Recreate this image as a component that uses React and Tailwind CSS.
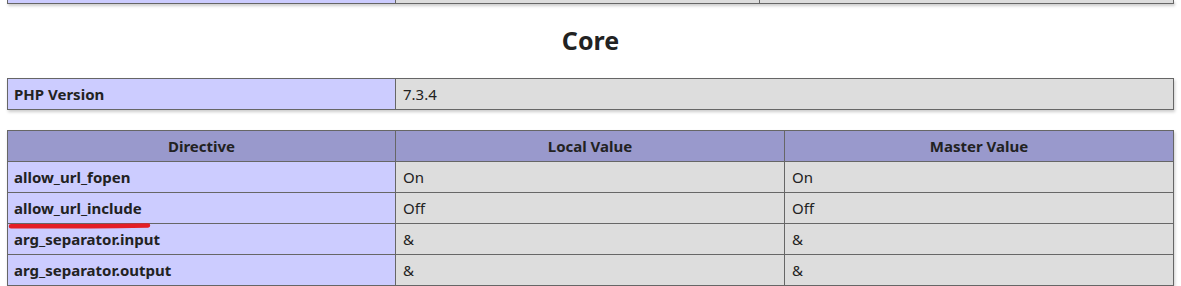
import React from 'react';

const font = { fontFamily: '"Noto Sans", "Open Sans", sans-serif' };

const rows = [
  { name: 'allow_url_fopen', local: 'On', master: 'On' },
  { name: 'allow_url_include', local: 'Off', master: 'Off' },
  { name: 'arg_separator.input', local: '&', master: '&' },
  { name: 'arg_separator.output', local: '&', master: '&' },
];

const App = () => {
  return (
    <div className="bg-white text-[#222] w-[1181px] h-[286px] overflow-hidden" style={font}>
      {/* Tail of the previous table */}
      <div className="mx-[7px] w-[1167px] flex h-[4px] border-x border-b border-[#666] shadow-[1px_2px_3px_#ccc]">
        <div className="w-[388px] bg-[#ccf] border-r border-[#666]"></div>
        <div className="w-[364px] bg-[#ddd] border-r border-[#666]"></div>
        <div className="flex-1 bg-[#ddd]"></div>
      </div>

      {/* Section title */}
      <h2 className="h-[74px] flex items-center justify-center text-[25px] font-bold">Core</h2>

      {/* PHP Version */}
      <div className="mx-[7px] w-[1167px] border-t border-l border-[#666] shadow-[1px_2px_3px_#ccc] text-[15px]">
        <div className="flex h-[31px]">
          <div className="w-[388px] bg-[#ccf] border-r border-b border-[#666] flex items-center px-[6px] font-bold">PHP Version</div>
          <div className="flex-1 bg-[#ddd] border-r border-b border-[#666] flex items-center px-[7px]">7.3.4</div>
        </div>
      </div>

      {/* Directives */}
      <div className="relative mt-[20px] mx-[7px] w-[1167px] border-t border-l border-[#666] shadow-[1px_2px_3px_#ccc] text-[15px]">
        <div className="grid grid-cols-[388px_389px_1fr] h-[31px] bg-[#99c] font-bold">
          <div className="border-r border-b border-[#666] flex items-center justify-center">Directive</div>
          <div className="border-r border-b border-[#666] flex items-center justify-center">Local Value</div>
          <div className="border-r border-b border-[#666] flex items-center justify-center">Master Value</div>
        </div>
        {rows.map((r) => (
          <div key={r.name} className="grid grid-cols-[388px_389px_1fr] h-[31px]">
            <div className="bg-[#ccf] border-r border-b border-[#666] flex items-center px-[6px] font-bold">{r.name}</div>
            <div className="bg-[#ddd] border-r border-b border-[#666] flex items-center px-[7px]">{r.local}</div>
            <div className="bg-[#ddd] border-r border-b border-[#666] flex items-center px-[7px]">{r.master}</div>
          </div>
        ))}

        {/* red underline mark */}
        <svg className="absolute left-0 top-[90px] pointer-events-none" width="150" height="10" viewBox="0 0 150 10">
          <path d="M3 5.2 C 40 5.6, 100 5.0, 140 4.4" stroke="#e41e26" strokeWidth="4.5" strokeLinecap="round" fill="none" />
        </svg>
      </div>
    </div>
  );
};

export default App;
